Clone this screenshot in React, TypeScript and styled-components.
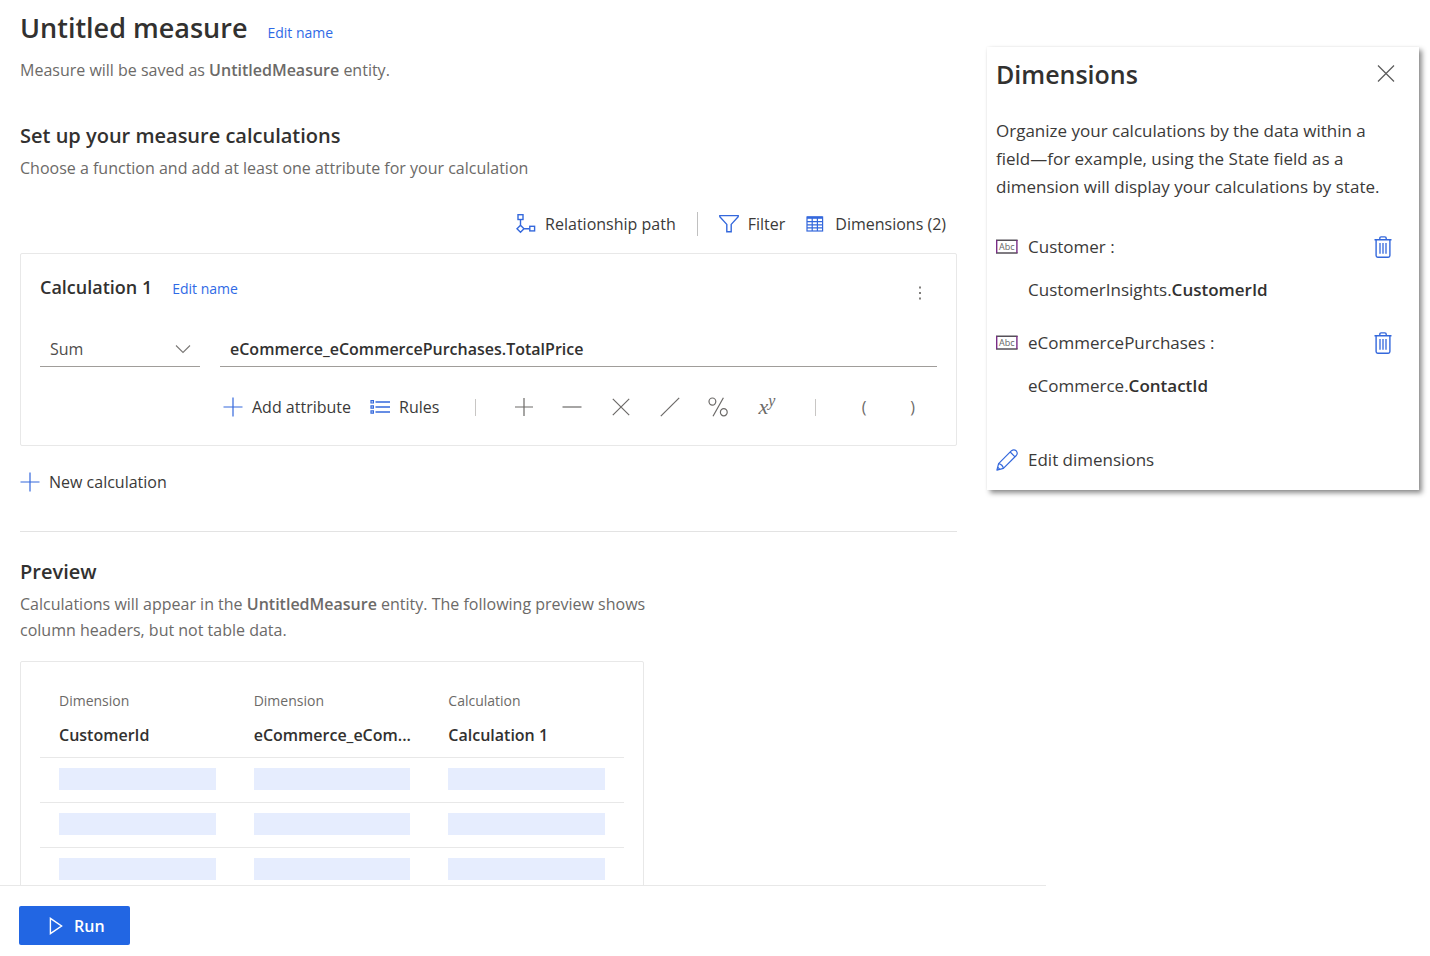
import React from "react";
import styled, { createGlobalStyle } from "styled-components";

const blue = "#3468dc";
const line = "#e8e8e8";

const GlobalStyle = createGlobalStyle`
  *, *::before, *::after { box-sizing: border-box; }
  body {
    margin: 0;
    background: #fff;
    color: #323130;
    font-family: "Open Sans", "Noto Sans", sans-serif;
    font-size: 16px;
    line-height: 26px;
  }
  h1, h2, h3, p { margin: 0; padding: 0; }
  button, input, select { font: inherit; color: inherit; }
  strong { font-weight: 600; }
`;

const Page = styled.div`
  display: flex;
  flex-direction: column;
  height: 100vh;
  overflow: hidden;
`;

const Body = styled.div`
  display: flex;
  align-items: flex-start;
  flex: 1;
  min-height: 0;
  overflow: hidden;
`;

const Main = styled.main`
  flex: 1;
  min-width: 0;
  padding: 10px 30px 0 20px;
`;

const NameRow = styled.div`
  display: flex;
  align-items: baseline;
  gap: 20px;
`;

const Title = styled.h1`
  font-size: 27px;
  line-height: 36px;
  font-weight: 600;
`;

const Heading = styled.h2`
  font-size: 20px;
  line-height: 28px;
  font-weight: 600;
`;

const CardTitle = styled.h3`
  font-size: 18px;
  line-height: 28px;
  font-weight: 600;
`;

const NameLink = styled.a`
  color: #2f6ae6;
  font-size: 14px;
  text-decoration: none;
`;

const Note = styled.p<{ $top?: number; $measure?: number }>`
  margin-top: ${(p) => p.$top ?? 5}px;
  max-width: ${(p) => (p.$measure ? `${p.$measure}px` : "none")};
  color: #6c6a68;
`;

const Section = styled.section<{ $top: number }>`
  margin-top: ${(p) => p.$top}px;
`;

const Toolbar = styled.div`
  display: flex;
  justify-content: flex-end;
  align-items: center;
  gap: 21px;
  height: 32px;
  margin-top: 27px;
  padding-right: 11px;
`;

const Divider = styled.span`
  width: 1px;
  height: 24px;
  background: #c0c0c0;
`;

const Command = styled.button<{ $gap?: number }>`
  display: inline-flex;
  align-items: center;
  gap: ${(p) => p.$gap ?? 9}px;
  padding: 0;
  border: 0;
  background: none;
  color: #3b3a39;
  white-space: nowrap;
  cursor: pointer;
`;

const Card = styled.div`
  margin-top: 13px;
  padding: 19px 19px 18px;
  border: 1px solid ${line};
  border-radius: 2px;
`;

const CardHead = styled.div`
  display: flex;
  justify-content: space-between;
  align-items: flex-start;
`;

const MoreButton = styled.button`
  display: flex;
  align-items: center;
  justify-content: center;
  width: 34px;
  height: 40px;
  padding: 0;
  border: 0;
  background: none;
  cursor: pointer;
`;

const Fields = styled.div`
  display: grid;
  grid-template-columns: 160px 1fr;
  column-gap: 20px;
  margin-top: 18px;
`;

const SelectWrap = styled.div`
  display: grid;
  align-items: center;
  border-bottom: 1px solid #a09d9a;

  > * { grid-area: 1 / 1; }
  > svg { justify-self: end; margin-right: 9px; pointer-events: none; }
`;

const Select = styled.select`
  appearance: none;
  width: 100%;
  height: 35px;
  padding: 0 34px 0 10px;
  border: 0;
  background: none;
  color: #4f4d4b;
  outline: none;
`;

const Expression = styled.input`
  width: 100%;
  height: 36px;
  padding: 0 10px;
  border: 0;
  border-bottom: 1px solid #a09d9a;
  border-radius: 0;
  background: none;
  font-weight: 600;
  outline: none;
`;

const Operators = styled.div`
  grid-column: 2;
  display: flex;
  align-items: center;
  height: 40px;
  margin-top: 20px;
  padding-left: 3px;
`;

const Commands = styled.div`
  display: flex;
  gap: 19px;
  width: 228px;
  flex: none;
`;

const OperatorList = styled.div`
  display: flex;
  align-items: center;
  flex: 1;
`;

const OperatorCell = styled.span`
  display: flex;
  justify-content: center;
  flex: 1;
`;

const Operator = styled.button`
  display: flex;
  align-items: center;
  justify-content: center;
  width: 32px;
  height: 32px;
  padding: 0;
  border: 0;
  background: none;
  color: #6c6a68;
  cursor: pointer;
`;

const Bar = styled.span`
  width: 1px;
  height: 17px;
  background: #c8c6c4;
`;

const Power = styled.span`
  font-family: "Liberation Serif", serif;
  font-style: italic;
  font-size: 22px;

  sup { font-size: 16px; line-height: 1; }
`;

const NewRow = styled.div`
  display: flex;
  align-items: center;
  height: 32px;
  margin-top: 20px;
`;

const Rule = styled.hr`
  height: 1px;
  margin: 33px 0 0;
  border: 0;
  background: #e3e3e3;
`;

const PreviewCard = styled.div`
  max-width: 624px;
  margin-top: 18px;
  padding: 24px 19px;
  border: 1px solid ${line};
  border-radius: 2px;
`;

const Table = styled.table`
  width: 100%;
  table-layout: fixed;
  border-collapse: collapse;
  text-align: left;
`;

const HeadCell = styled.th`
  padding: 2px 12px 9px 19px;
  font-weight: 600;
`;

const HeadKind = styled.span`
  display: block;
  color: #6c6a68;
  font-size: 14px;
  line-height: 26px;
  font-weight: 400;
`;

const HeadName = styled.span`
  display: block;
  margin-top: 8px;
  line-height: 26px;
  overflow: hidden;
  text-overflow: ellipsis;
  white-space: nowrap;
`;

const Cell = styled.td`
  height: 45px;
  padding: 0 19px;
  border-top: 1px solid ${line};
`;

const Placeholder = styled.div`
  height: 22px;
  margin-bottom: 2px;
  background: #e6edfe;
`;

const Footer = styled.footer`
  width: calc(100% - 384px);
  padding: 20px 19px 11px;
  border-top: 1px solid ${line};
`;

const RunButton = styled.button`
  display: flex;
  align-items: center;
  gap: 11px;
  height: 39px;
  padding: 0 25px 0 30px;
  border: 0;
  border-radius: 2px;
  background: #2266e3;
  color: #fff;
  font-weight: 600;
  cursor: pointer;
`;

const Panel = styled.aside`
  flex: none;
  width: 432px;
  margin: 47px 11px 0 0;
  padding: 9px 24px 16px 9px;
  background: #fff;
  box-shadow: 3px 3px 5px rgba(0, 0, 0, 0.45), 0 0 2px rgba(0, 0, 0, 0.05);
  font-size: 17px;
  line-height: 28px;
`;

const PanelHead = styled.div`
  display: flex;
  justify-content: space-between;
  align-items: center;
`;

const PanelTitle = styled.h2`
  font-size: 25px;
  line-height: 36px;
  font-weight: 600;
`;

const IconButton = styled.button`
  display: flex;
  padding: 0;
  border: 0;
  background: none;
  cursor: pointer;
`;

const PanelText = styled.p`
  margin-top: 25px;
  color: #3b3a39;
`;

const DimensionList = styled.div`
  padding: 7px 3px 0 0;
  color: #3b3a39;

  strong { color: #323130; }
`;

const Dimension = styled.div`
  display: grid;
  grid-template-columns: 22px 1fr auto;
  column-gap: 10px;
  row-gap: 15px;
  align-items: center;
  margin-top: 25px;
`;

const Field = styled.span`
  grid-column: 2;
`;

const EditRow = styled.div`
  display: flex;
  margin-top: 46px;
`;

const PlusIcon = () => (
  <svg width="20" height="20" viewBox="0 0 20 20" fill="none" stroke={blue} strokeWidth="1.2">
    <path d="M10 0.5V19.5M0.5 10H19.5" />
  </svg>
);

const PathIcon = () => (
  <svg width="20" height="20" viewBox="0 0 20 20" fill="none" stroke={blue} strokeWidth="1.4">
    <rect x="2" y="0.7" width="5" height="4.8" />
    <path d="M4.5 5.5V11.2M4.5 11.2L8 14.8L4.5 18.3L1 14.8ZM8 14.8H13.5" />
    <rect x="13.8" y="12.3" width="4.8" height="4.6" />
  </svg>
);

const FilterIcon = () => (
  <svg width="20" height="20" viewBox="0 0 20 20" fill="none" stroke={blue} strokeWidth="1.4">
    <path d="M0.8 1.6H19.2V2.8L12.2 10.4V17.8H7.8V10.4L0.8 2.8Z" />
  </svg>
);

const GridIcon = () => (
  <svg width="18" height="18" viewBox="0 0 18 18" fill="none" stroke={blue} strokeWidth="1.2">
    <rect x="1" y="2" width="15.6" height="14" />
    <path d="M1 2.6H16.6" strokeWidth="2.4" />
    <path d="M1 6.6H16.6M1 9.8H16.6M1 12.9H16.6M6.2 3V16M11.4 3V16" />
  </svg>
);

const RulesIcon = () => (
  <svg width="20" height="16" viewBox="0 0 20 16" fill="none" stroke={blue} strokeWidth="1.4">
    <path d="M5.5 3H20M5.5 8H20M5.5 13H20" />
    <path d="M1 1.7H3.4V4H1ZM1 6.8H3.4V9.2H1ZM1 11.8H3.4V14.2H1Z" strokeWidth="1.2" />
  </svg>
);

const MoreIcon = () => (
  <svg width="4" height="16" viewBox="0 0 4 16" fill="#807e7c">
    <rect x="1" y="1.5" width="2" height="2" />
    <rect x="1" y="7" width="2" height="2" />
    <rect x="1" y="12.5" width="2" height="2" />
  </svg>
);

const ChevronIcon = () => (
  <svg width="16" height="10" viewBox="0 0 16 10" fill="none" stroke="#7a7876" strokeWidth="1.1">
    <path d="M1 1.5L8 8.5L15 1.5" />
  </svg>
);

const OpIcon = ({ d }: { d: string }) => (
  <svg width="20" height="20" viewBox="0 0 20 20" fill="none" stroke="#6c6a68" strokeWidth="1.2">
    <path d={d} />
  </svg>
);

const CloseIcon = () => (
  <svg width="18" height="18" viewBox="0 0 18 18" fill="none" stroke="#5a5a5a" strokeWidth="1.2">
    <path d="M1 0.5L17 16.5M17 0.5L1 16.5" />
  </svg>
);

const TrashIcon = () => (
  <svg width="18" height="22" viewBox="0 0 18 22" fill="none" stroke={blue} strokeWidth="1.4">
    <path d="M0.5 3.8H17.5M5.8 3.8V2.2Q5.8 0.9 7.1 0.9H10.9Q12.2 0.9 12.2 2.2V3.8" />
    <path d="M2.1 3.8V19.6Q2.1 21.2 3.7 21.2H14.3Q15.9 21.2 15.9 19.6V3.8" />
    <path d="M6 7V17.8M9 7V17.8M12 7V17.8" strokeWidth="1.3" />
  </svg>
);

const AbcIcon = () => (
  <svg width="22" height="16" viewBox="0 0 22 16" aria-hidden="true">
    <path d="M0 1.2H21.6M0 14H21.6" fill="none" stroke="#555058" strokeWidth="1.5" />
    <path d="M0.7 1V14M20.9 1V14" fill="none" stroke="#7a2d86" strokeWidth="1.4" />
    <text x="10.8" y="10.8" textAnchor="middle" fontSize="9" fontFamily="Open Sans, sans-serif" fill="#666">
      Abc
    </text>
  </svg>
);

const PencilIcon = () => (
  <svg width="22" height="22" viewBox="0 0 22 22" fill="none" stroke={blue} strokeWidth="1.2" strokeLinejoin="round">
    <path d="M0.9 21.1L2.6 14.6L15.5 1.7Q17.9 -0.2 20.2 1.8Q22.2 4.1 20.3 6.5L7.4 19.4Z" />
    <path d="M14.2 3L19 7.8M2.6 14.6Q6.6 15.4 7.4 19.4M1.7 18.2L3.8 20.3" />
  </svg>
);

const PlayIcon = () => (
  <svg width="14" height="18" viewBox="0 0 14 18" fill="none" stroke="#fff" strokeWidth="1.4">
    <path d="M1.4 1.4V16.6L12.6 9Z" />
  </svg>
);

const operators = [
  { label: "Add", d: "M10 1V19M1 10H19" },
  { label: "Subtract", d: "M0.5 10H19.5" },
  { label: "Multiply", d: "M1.8 1.8L18.2 18.2M18.2 1.8L1.8 18.2" },
  { label: "Divide", d: "M0.8 19.2L19.2 0.8" },
  {
    label: "Percent",
    d: "M15.4 0.8L5 19.2M4.4 1A3.4 3.6 0 1 1 4.4 8.2A3.4 3.6 0 1 1 4.4 1M15.8 11.6A3.4 3.6 0 1 1 15.8 18.8A3.4 3.6 0 1 1 15.8 11.6",
  },
];

const columns = [
  { kind: "Dimension", name: "CustomerId" },
  { kind: "Dimension", name: "eCommerce_eCom..." },
  { kind: "Calculation", name: "Calculation 1" },
];

const dimensions = [
  { entity: "Customer", source: "CustomerInsights", field: "CustomerId" },
  { entity: "eCommercePurchases", source: "eCommerce", field: "ContactId" },
];

const previewRows = [0, 1, 2, 3];

export default function App() {
  return (
    <Page>
      <GlobalStyle />
      <Body>
        <Main>
          <NameRow>
            <Title>Untitled measure</Title>
            <NameLink href="#name">Edit name</NameLink>
          </NameRow>
          <Note $top={11}>
            Measure will be saved as <strong>UntitledMeasure</strong> entity.
          </Note>

          <Section $top={39}>
            <Heading>Set up your measure calculations</Heading>
            <Note>Choose a function and add at least one attribute for your calculation</Note>
            <Toolbar>
              <Command><PathIcon />Relationship path</Command>
              <Divider />
              <Command><FilterIcon />Filter</Command>
              <Command $gap={11}><GridIcon />Dimensions (2)</Command>
            </Toolbar>

            <Card>
              <CardHead>
                <NameRow>
                  <CardTitle>Calculation 1</CardTitle>
                  <NameLink href="#calculation-name">Edit name</NameLink>
                </NameRow>
                <MoreButton aria-label="More options"><MoreIcon /></MoreButton>
              </CardHead>
              <Fields>
                <SelectWrap>
                  <Select aria-label="Function" defaultValue="Sum">
                    <option>Sum</option>
                    <option>Average</option>
                    <option>Count</option>
                  </Select>
                  <ChevronIcon />
                </SelectWrap>
                <Expression aria-label="Attribute" defaultValue="eCommerce_eCommercePurchases.TotalPrice" />
                <Operators>
                  <Commands>
                    <Command><PlusIcon />Add attribute</Command>
                    <Command><RulesIcon />Rules</Command>
                  </Commands>
                  <OperatorList>
                    <OperatorCell><Bar /></OperatorCell>
                    {operators.map((op) => (
                      <OperatorCell key={op.label}>
                        <Operator aria-label={op.label}><OpIcon d={op.d} /></Operator>
                      </OperatorCell>
                    ))}
                    <OperatorCell>
                      <Operator aria-label="Power"><Power>x<sup>y</sup></Power></Operator>
                    </OperatorCell>
                    <OperatorCell><Bar /></OperatorCell>
                    <OperatorCell><Operator>(</Operator></OperatorCell>
                    <OperatorCell><Operator>)</Operator></OperatorCell>
                  </OperatorList>
                </Operators>
              </Fields>
            </Card>

            <NewRow>
              <Command><PlusIcon />New calculation</Command>
            </NewRow>
          </Section>

          <Rule />

          <Section $top={26}>
            <Heading>Preview</Heading>
            <Note $measure={640}>
              Calculations will appear in the <strong>UntitledMeasure</strong> entity. The following preview shows
              column headers, but not table data.
            </Note>
            <PreviewCard>
              <Table>
                <thead>
                  <tr>
                    {columns.map((c) => (
                      <HeadCell key={c.name} scope="col">
                        <HeadKind>{c.kind}</HeadKind>
                        <HeadName>{c.name}</HeadName>
                      </HeadCell>
                    ))}
                  </tr>
                </thead>
                <tbody>
                  {previewRows.map((row) => (
                    <tr key={row}>
                      {columns.map((c) => (
                        <Cell key={c.name}><Placeholder /></Cell>
                      ))}
                    </tr>
                  ))}
                </tbody>
              </Table>
            </PreviewCard>
          </Section>
        </Main>

        <Panel>
          <PanelHead>
            <PanelTitle>Dimensions</PanelTitle>
            <IconButton aria-label="Close"><CloseIcon /></IconButton>
          </PanelHead>
          <PanelText>
            Organize your calculations by the data within a field—for example, using the State field as a
            dimension will display your calculations by state.
          </PanelText>
          <DimensionList>
            {dimensions.map((d) => (
              <Dimension key={d.entity}>
                <AbcIcon />
                <span>{d.entity} :</span>
                <IconButton aria-label={`Remove ${d.entity}`}><TrashIcon /></IconButton>
                <Field>{d.source}.<strong>{d.field}</strong></Field>
              </Dimension>
            ))}
          </DimensionList>
          <EditRow>
            <Command $gap={10}><PencilIcon />Edit dimensions</Command>
          </EditRow>
        </Panel>
      </Body>

      <Footer>
        <RunButton><PlayIcon />Run</RunButton>
      </Footer>
    </Page>
  );
}
